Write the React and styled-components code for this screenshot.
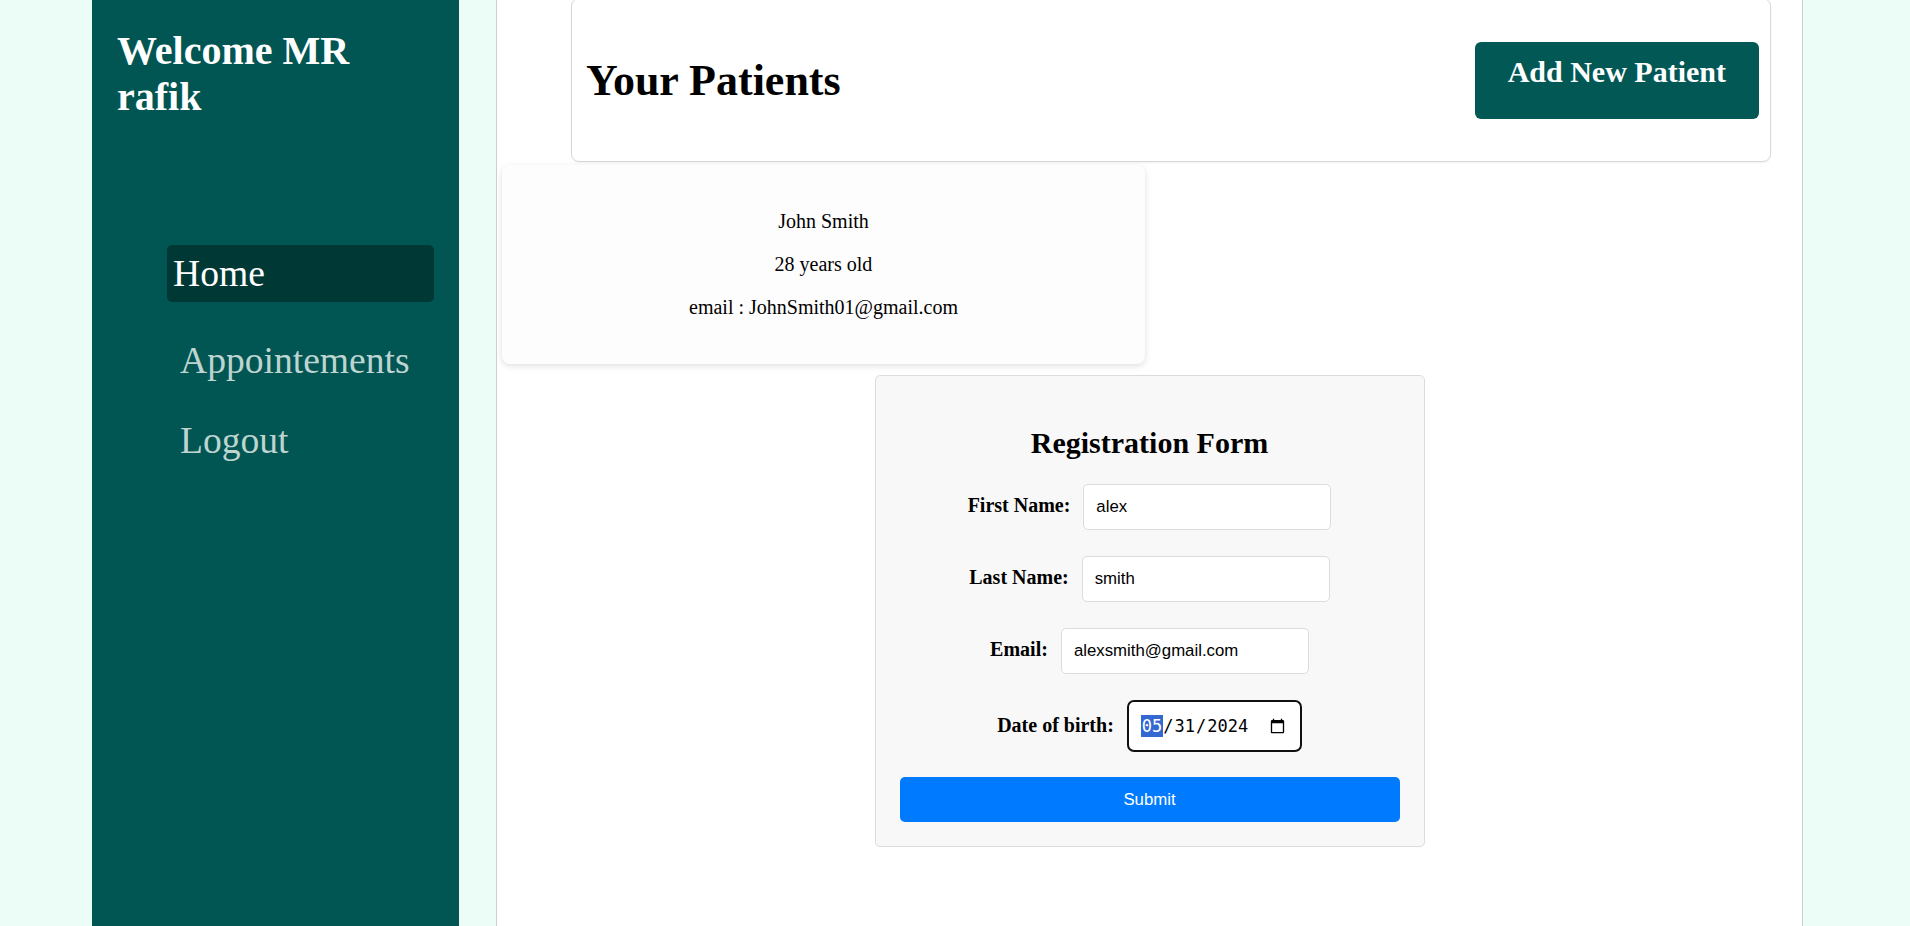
import React from 'react'
import styled, { createGlobalStyle } from 'styled-components'

const GlobalStyle = createGlobalStyle`
    html, body {
        margin: 0;
        padding: 0;
    }
    body {
        background: #ebfdf6;
        font-family: "Liberation Serif", "Times New Roman", serif;
        color: #000;
    }
    * {
        box-sizing: border-box;
    }
`

const Page = styled.div`
    display: flex;
    align-items: stretch;
    min-height: 2180px;
    padding-left: 92px;
`

const Sidebar = styled.aside`
    width: 367px;
    flex-shrink: 0;
    background: #015653;
    padding: 28px 25px;
`

const Welcome = styled.h2`
    margin: 0;
    font-size: 40px;
    line-height: 46px;
    font-weight: bold;
    color: #ffffff;
`

const Nav = styled.ul`
    list-style: none;
    margin: 125px 0 0 50px;
    padding: 0;
    display: flex;
    flex-direction: column;
    gap: 37px;
`

const NavItem = styled.li`
    font-size: 37.6px;
    line-height: 43px;
    border-radius: 5px;
    cursor: pointer;
    color: ${props => props.$active ? '#ffffff' : '#bdd4d0'};
    background: ${props => props.$active ? '#003836' : 'transparent'};
    padding: ${props => props.$active ? '7px 6px' : '0 0 0 13px'};
`

const Main = styled.main`
    width: 1307px;
    flex-shrink: 0;
    margin-left: 37px;
    background: #ffffff;
    border-left: 1px solid #cfcfcf;
    border-right: 1px solid #cfcfcf;
    display: flex;
    flex-direction: column;
`

const HeaderCard = styled.div`
    width: 1200px;
    height: 164px;
    margin: -2px 0 0 74px;
    border: 1px solid #d8d8d8;
    border-radius: 8px;
    box-shadow: 0 1px 2px rgba(0, 0, 0, 0.06);
    display: flex;
    align-items: center;
    justify-content: space-between;
    padding: 0 11px 0 14px;
`

const Title = styled.h1`
    margin: 0;
    font-size: 44px;
    font-weight: bold;
`

const AddButton = styled.button`
    border: none;
    border-radius: 6px;
    background: #025855;
    color: #ffffff;
    font-family: "Liberation Serif", serif;
    font-size: 30px;
    font-weight: bold;
    line-height: normal;
    padding: 13px 33px 30px;
    cursor: pointer;
`

const PatientCard = styled.div`
    width: 643px;
    margin: 3px 0 0 5px;
    padding: 25px;
    background: #fdfdfd;
    border-radius: 8px;
    box-shadow: 0 2px 6px rgba(0, 0, 0, 0.13);
    text-align: center;

    p {
        font-size: 20px;
        margin: 20px 0;
    }
`

const FormBox = styled.form`
    width: 550px;
    margin: 11px auto 0;
    padding: 24px;
    background: #f8f8f8;
    border: 1px solid #dcdcdc;
    border-radius: 5px;
`

const FormTitle = styled.h2`
    margin: 26px 0 24px;
    text-align: center;
    font-size: 30px;
    font-weight: bold;
`

const Row = styled.div`
    display: flex;
    justify-content: center;
    align-items: baseline;
    gap: 13px;
    margin-bottom: ${props => props.$last ? '25px' : '26px'};
`

const Label = styled.label`
    font-size: 20px;
    font-weight: bold;
`

const Input = styled.input`
    width: 248px;
    height: 46px;
    padding: 0 12px;
    border: 1px solid #dcdcdc;
    border-radius: 5px;
    background: #ffffff;
    font-family: "Liberation Sans", Arial, sans-serif;
    font-size: 16.8px;
    color: #000;
    outline: none;
`

const DateInput = styled.input`
    width: 175px;
    height: 52px;
    padding: 0 12px;
    border: 2px solid #101010;
    border-radius: 7px;
    background: #ffffff;
    font-family: "DejaVu Sans Mono", monospace;
    font-size: 17px;
    color: #000;
    outline: none;
`

const Submit = styled.button`
    width: 100%;
    height: 45px;
    border: none;
    border-radius: 5px;
    background: #007bff;
    color: #ffffff;
    font-family: "Liberation Sans", Arial, sans-serif;
    font-size: 16.8px;
    cursor: pointer;
`

const patients = [
    { name: 'John Smith', age: 28, email: 'JohnSmith01@gmail.com' },
]

export default function App() {

    const handleSubmit = (e) => {
        e.preventDefault();
    }

    return (
        <>
            <GlobalStyle />
            <Page>
                <Sidebar>
                    <Welcome>Welcome MR rafik</Welcome>
                    <Nav>
                        <NavItem $active>Home</NavItem>
                        <NavItem>Appointements</NavItem>
                        <NavItem>Logout</NavItem>
                    </Nav>
                </Sidebar>

                <Main>
                    <HeaderCard>
                        <Title>Your Patients</Title>
                        <AddButton>Add New Patient</AddButton>
                    </HeaderCard>

                    {patients.map(p => (
                        <PatientCard key={p.email}>
                            <p>{p.name}</p>
                            <p>{p.age} years old</p>
                            <p>email : {p.email}</p>
                        </PatientCard>
                    ))}

                    <FormBox onSubmit={handleSubmit}>
                        <FormTitle>Registration Form</FormTitle>
                        <Row>
                            <Label htmlFor="firstName">First Name:</Label>
                            <Input id="firstName" type="text" defaultValue="alex" />
                        </Row>
                        <Row>
                            <Label htmlFor="lastName">Last Name:</Label>
                            <Input id="lastName" type="text" defaultValue="smith" />
                        </Row>
                        <Row>
                            <Label htmlFor="email">Email:</Label>
                            <Input id="email" type="email" defaultValue="alexsmith@gmail.com" />
                        </Row>
                        <Row $last>
                            <Label htmlFor="dob">Date of birth:</Label>
                            <DateInput id="dob" type="date" defaultValue="2024-05-31" autoFocus />
                        </Row>
                        <Submit type="submit">Submit</Submit>
                    </FormBox>
                </Main>
            </Page>
        </>
    )
}
